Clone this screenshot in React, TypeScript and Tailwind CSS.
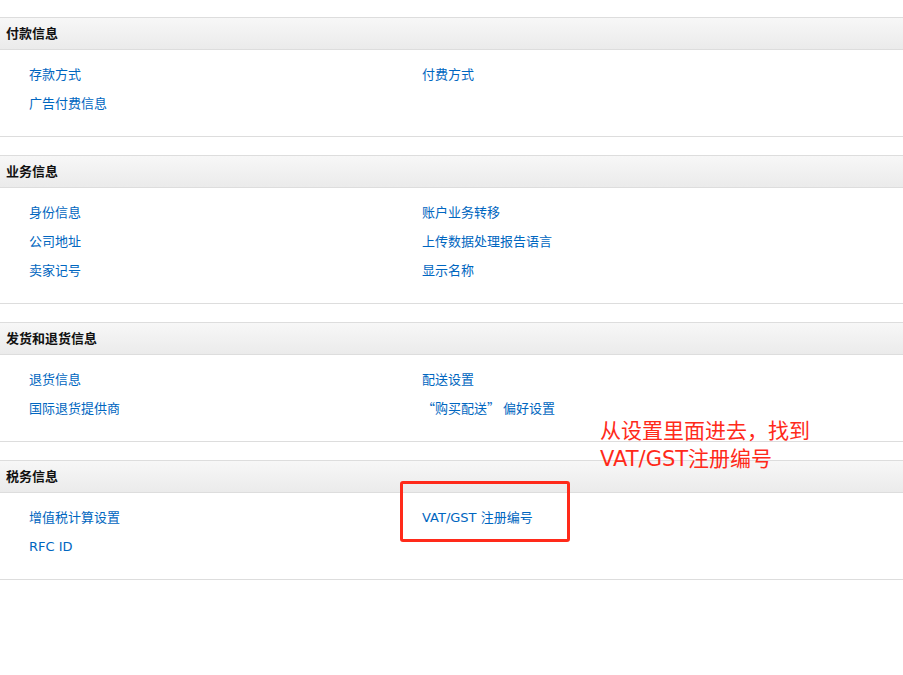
type Section = {
  title: string
  left: string[]
  right: string[]
}

const sections: Section[] = [
  { title: "付款信息", left: ["存款方式", "广告付费信息"], right: ["付费方式"] },
  {
    title: "业务信息",
    left: ["身份信息", "公司地址", "卖家记号"],
    right: ["账户业务转移", "上传数据处理报告语言", "显示名称"],
  },
  {
    title: "发货和退货信息",
    left: ["退货信息", "国际退货提供商"],
    right: ["配送设置", "“购买配送” 偏好设置"],
  },
  { title: "税务信息", left: ["增值税计算设置", "RFC ID"], right: ["VAT/GST 注册编号"] },
]

function LinkColumn({ items }: { items: string[] }) {
  return (
    <ul className="flex flex-col">
      {items.map((item) => (
        <li key={item} className="h-[29px] leading-[29px]">
          {/* curly quotes need the CJK face to get full-width glyphs */}
          <a
            className={
              item.includes("“")
                ? "font-['Noto_Sans_CJK_SC',sans-serif] text-[13px] text-[#0066c0]"
                : "text-[13px] text-[#0066c0]"
            }
            href="#"
          >
            {item}
          </a>
        </li>
      ))}
    </ul>
  )
}

function SettingsSection({ section }: { section: Section }) {
  return (
    <section className="border-y border-[#dddddd]">
      <h3 className="h-[32px] border-b border-[#dddddd] bg-gradient-to-b from-[#f7f7f7] to-[#ebebeb] pl-[6px] text-[13px] font-bold leading-[31px] text-[#111111]">
        {section.title}
      </h3>
      <div className="grid grid-cols-[393px_1fr] pb-[19px] pl-[29px] pt-[9px]">
        <LinkColumn items={section.left} />
        <LinkColumn items={section.right} />
      </div>
    </section>
  )
}

export default function App() {
  return (
    <div className="relative h-[675px] w-[903px] bg-white font-['DejaVu_Sans','Noto_Sans_CJK_SC',sans-serif]">
      <div className="flex flex-col gap-[18px] pt-[17px]">
        {sections.map((section) => (
          <SettingsSection key={section.title} section={section} />
        ))}
      </div>

      {/* annotation */}
      <div className="absolute left-[600px] top-[417px] text-[21px] leading-[28px] text-[#ff2a1a]">
        <p>从设置里面进去，找到</p>
        <p>VAT/GST注册编号</p>
      </div>
      <div className="absolute left-[400px] top-[481px] h-[61px] w-[170px] rounded-[3px] border-[3px] border-[#ff2a1a]" />
    </div>
  )
}
